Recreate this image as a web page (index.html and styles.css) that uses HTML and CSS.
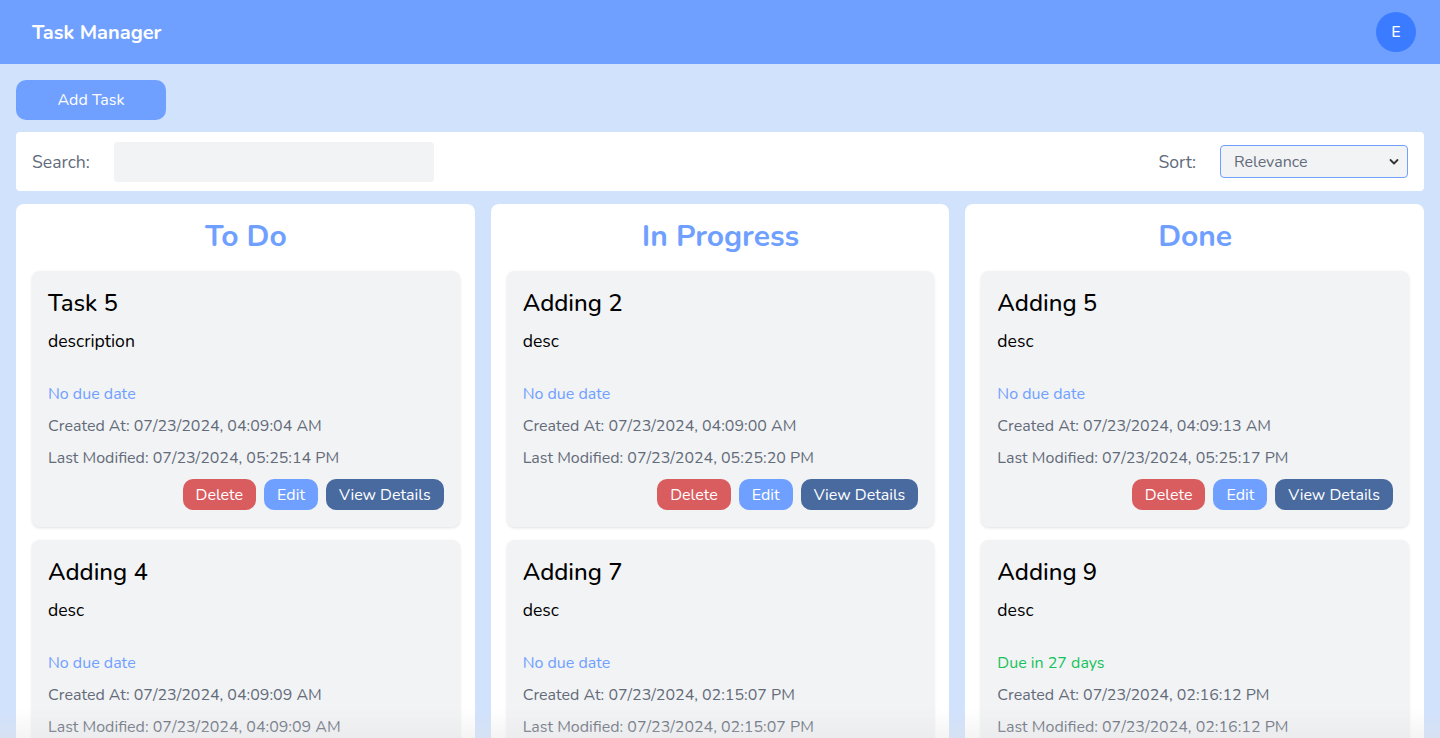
FILE: index.html
```html
<!DOCTYPE html>
<html lang="en">
<head>
<meta charset="utf-8">
<title>Task Manager</title>
<link rel="stylesheet" href="styles.css">
</head>
<body>
<header class="topbar">
  <div class="brand">Task Manager</div>
  <div class="avatar">E</div>
</header>
<main class="page">
  <div class="actions"><button class="btn-add">Add Task</button></div>
  <section class="filters">
    <label class="field"><span class="field-label">Search:</span><input class="search" type="text"></label>
    <label class="field"><span class="field-label">Sort:</span>
      <span class="select"><span>Relevance</span><svg width="10" height="8" viewBox="0 0 10 8"><path d="M1.5 2l3.5 3.5L8.5 2" fill="none" stroke="#333" stroke-width="1.8" stroke-linecap="round" stroke-linejoin="round"/></svg></span>
    </label>
  </section>
  <section class="board">
    <div class="column">
      <h2 class="col-title">To Do</h2>
      <article class="card">
        <h3 class="card-title">Task 5</h3>
        <p class="card-desc">description</p>
        <p class="due none">No due date</p>
        <p class="meta">Created At: 07/23/2024, 04:09:04 AM</p>
        <p class="meta">Last Modified: 07/23/2024, 05:25:14 PM</p>
        <div class="card-btns"><button class="b del">Delete</button><button class="b edit">Edit</button><button class="b view">View Details</button></div>
      </article>
      <article class="card">
        <h3 class="card-title">Adding 4</h3>
        <p class="card-desc">desc</p>
        <p class="due none">No due date</p>
        <p class="meta">Created At: 07/23/2024, 04:09:09 AM</p>
        <p class="meta">Last Modified: 07/23/2024, 04:09:09 AM</p>
        <div class="card-btns"><button class="b del">Delete</button><button class="b edit">Edit</button><button class="b view">View Details</button></div>
      </article>
    </div>
    <div class="column">
      <h2 class="col-title">In Progress</h2>
      <article class="card">
        <h3 class="card-title">Adding 2</h3>
        <p class="card-desc">desc</p>
        <p class="due none">No due date</p>
        <p class="meta">Created At: 07/23/2024, 04:09:00 AM</p>
        <p class="meta">Last Modified: 07/23/2024, 05:25:20 PM</p>
        <div class="card-btns"><button class="b del">Delete</button><button class="b edit">Edit</button><button class="b view">View Details</button></div>
      </article>
      <article class="card">
        <h3 class="card-title">Adding 7</h3>
        <p class="card-desc">desc</p>
        <p class="due none">No due date</p>
        <p class="meta">Created At: 07/23/2024, 02:15:07 PM</p>
        <p class="meta">Last Modified: 07/23/2024, 02:15:07 PM</p>
        <div class="card-btns"><button class="b del">Delete</button><button class="b edit">Edit</button><button class="b view">View Details</button></div>
      </article>
    </div>
    <div class="column">
      <h2 class="col-title">Done</h2>
      <article class="card">
        <h3 class="card-title">Adding 5</h3>
        <p class="card-desc">desc</p>
        <p class="due none">No due date</p>
        <p class="meta">Created At: 07/23/2024, 04:09:13 AM</p>
        <p class="meta">Last Modified: 07/23/2024, 05:25:17 PM</p>
        <div class="card-btns"><button class="b del">Delete</button><button class="b edit">Edit</button><button class="b view">View Details</button></div>
      </article>
      <article class="card">
        <h3 class="card-title">Adding 9</h3>
        <p class="card-desc">desc</p>
        <p class="due soon">Due in 27 days</p>
        <p class="meta">Created At: 07/23/2024, 02:16:12 PM</p>
        <p class="meta">Last Modified: 07/23/2024, 02:16:12 PM</p>
        <div class="card-btns"><button class="b del">Delete</button><button class="b edit">Edit</button><button class="b view">View Details</button></div>
      </article>
    </div>
  </section>
</main>
<div class="fade"></div>
</body>
</html>
```
FILE: styles.css
```css
* { box-sizing: border-box; }
html, body { margin: 0; padding: 0; }
body {
  font-family: "Nunito", "Lato", "Noto Sans", sans-serif;
  background: #d1e2fd;
  color: #000;
  height: 738px;
  overflow: hidden;
}
.topbar {
  height: 64px;
  background: #70a0ff;
  display: flex;
  align-items: center;
  justify-content: space-between;
  padding: 0 24px 0 32px;
}
.brand { color: #fff; font-weight: 700; font-size: 20px; }
.avatar {
  width: 40px; height: 40px; border-radius: 50%;
  background: #3b7bff; color: #fff;
  display: flex; align-items: center; justify-content: center;
  font-size: 16px; font-weight: 500;
}
.page { padding: 16px; }
.actions { margin-bottom: 12px; }
.btn-add {
  width: 150px; height: 40px; border: none; border-radius: 10px;
  background: #70a0ff; color: #fff; font: inherit; font-size: 16px;
}
.filters {
  background: #fff; border-radius: 4px;
  height: 59px;
  display: flex; align-items: center; justify-content: space-between;
  padding: 0 16px;
  margin-bottom: 13px;
}
.field { display: flex; align-items: center; }
.field-label { color: #626b7a; font-size: 17.6px; }
.search {
  margin-left: 24px; width: 320px; height: 40px; border: none; border-radius: 4px;
  background: #f2f3f5; outline: none;
}
.select {
  margin-left: 24px; width: 188px; height: 33px; border: 1px solid #70a0ff; border-radius: 4px;
  background: #f2f3f5; display: flex; align-items: center; justify-content: space-between;
  padding: 0 8px 0 13px; color: #626b7a; font-size: 16px;
}
.board { display: grid; grid-template-columns: repeat(3, 1fr); gap: 16px; }
.column { background: #fff; border-radius: 8px; padding: 17px 15px 16px 16px; }
.col-title {
  margin: 0 0 18px; text-align: center; color: #70a0ff; font-size: 30px; font-weight: 700; line-height: 32px;
}
.card {
  background: #f2f3f5; border-radius: 8px; padding: 16px 16px 17px;
  box-shadow: 0 1px 3px rgba(0,0,0,0.12);
  margin-bottom: 13px;
}
.card-title { margin: 0; font-size: 24px; font-weight: 500; line-height: 32px; }
.card-desc { margin: 10px 0 0; font-size: 17.6px; height: 24px; line-height: 24px; }
.due { margin: 31px 0 0; font-size: 16px; line-height: 20px; }
.due.none { color: #70a0ff; }
.due.soon { color: #16c35a; }
.meta { margin: 12px 0 0; font-size: 16px; line-height: 20px; color: #636b79; }
.card-btns { display: flex; justify-content: flex-end; gap: 8px; margin-top: 11px; }
.b {
  height: 31px; border: none; border-radius: 10px; color: #fff; font: inherit; font-size: 16px;
  padding: 0 13px;
}
.del { background: #d95c5f; }
.edit { background: #70a0ff; }
.view { background: #496a9f; }
.fade {
  position: fixed; left: 0; right: 0; bottom: 0; height: 30px;
  background: linear-gradient(to bottom, rgba(255,255,255,0), rgba(225,225,225,0.35));
  pointer-events: none;
}
```
